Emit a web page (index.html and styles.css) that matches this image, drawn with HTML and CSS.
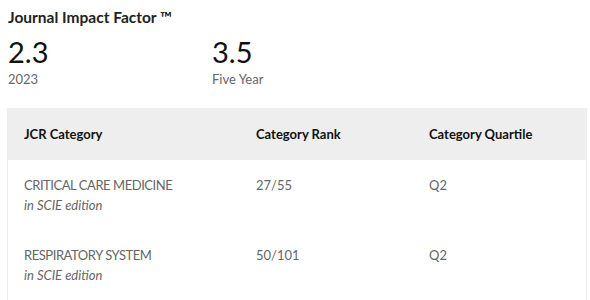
FILE: index.html
```html
<!DOCTYPE html>
<html lang="en">
<head>
<meta charset="utf-8">
<link rel="stylesheet" href="styles.css">
</head>
<body>
<div class="page">
  <h2 class="title">Journal Impact Factor ™</h2>
  <div class="metrics">
    <div class="metric">
      <div class="value">2.3</div>
      <div class="label">2023</div>
    </div>
    <div class="metric">
      <div class="value">3.5</div>
      <div class="label">Five Year</div>
    </div>
  </div>
  <div class="table">
    <div class="row head">
      <div class="cell">JCR Category</div>
      <div class="cell">Category Rank</div>
      <div class="cell">Category Quartile</div>
    </div>
    <div class="row">
      <div class="cell"><div class="cat">CRITICAL CARE MEDICINE</div><div class="ed">in SCIE edition</div></div>
      <div class="cell">27/55</div>
      <div class="cell">Q2</div>
    </div>
    <div class="row">
      <div class="cell"><div class="cat">RESPIRATORY SYSTEM</div><div class="ed">in SCIE edition</div></div>
      <div class="cell">50/101</div>
      <div class="cell">Q2</div>
    </div>
  </div>
</div>
</body>
</html>
```

FILE: styles.css
```css
html, body {
  margin: 0;
  padding: 0;
  background: #fff;
}
body {
  font-family: Lato, "Noto Sans", sans-serif;
  color: #222;
}
.page {
  padding: 7px 0 0 7px;
  width: 580px;
}
.title {
  margin: 0;
  font-size: 15.5px;
  font-weight: 700;
  line-height: 20px;
  color: #222;
  padding-left: 1px;
}
.metrics {
  display: grid;
  grid-template-columns: 204px 1fr;
  margin-top: 8px;
  padding-left: 1px;
}
.value {
  font-size: 29px;
  line-height: 34px;
  color: #111;
}
.label {
  font-size: 13px;
  line-height: 20px;
  margin-top: 0;
  color: #666;
}
.table {
  margin-top: 19px;
  border-left: 1px solid #eeeeee;
  border-right: 1px solid #eeeeee;
  width: 578px;
}
.row {
  display: grid;
  grid-template-columns: 232px 173px 1fr;
  padding: 15px 0;
}
.row.head {
  background: #eeeeee;
  padding: 16px 0;
  font-weight: 700;
  color: #111;
}
.cell {
  padding-left: 16px;
  font-size: 13px;
  line-height: 20px;
}
.row:not(.head) .cell {
  color: #666;
}
.cat {
  letter-spacing: -0.45px;
}
.ed {
  font-style: italic;
}
```
